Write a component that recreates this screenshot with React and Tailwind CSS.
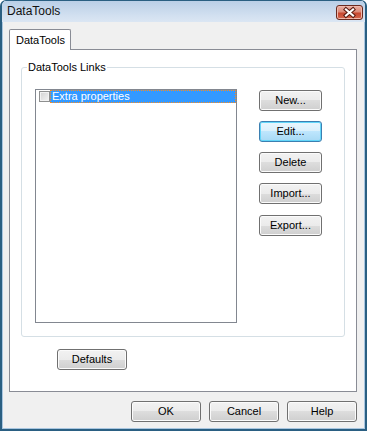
import React from "react";

const btn =
  "h-[21px] flex items-center justify-center rounded-[3px] border border-[#707070] bg-[linear-gradient(#f2f2f2,#ebebeb_50%,#dddddd_50%,#cfcfcf)] shadow-[inset_0_0_0_1px_#fbfbfb] text-[11px] text-black leading-none";

const hotBtn =
  "h-[21px] flex items-center justify-center rounded-[3px] border border-[#3c7fb1] bg-[linear-gradient(#eaf6fd,#d9f0fc_50%,#bee6fd_50%,#a7d9f5)] shadow-[inset_0_0_0_1px_#62d6f9] text-[11px] text-black leading-none";

function Button({ label, hot, className = "" }) {
  return <div className={`${hot ? hotBtn : btn} ${className}`}>{label}</div>;
}

export default function App() {
  return (
    <div className="w-[367px] h-[431px] flex flex-col overflow-hidden rounded-t-[6px] border-x-2 border-b-2 border-t border-[#2a5f82] bg-[#f0f0f0] font-[Liberation_Sans,Arial,sans-serif] select-none">
      {/* title bar */}
      <div className="h-[21px] shrink-0 flex items-start justify-between bg-[linear-gradient(#bacfe7,#d2e0f0_70%,#dbe6f3)]">
        <div className="pl-[5px] pt-[3px] text-[12px] leading-[14px] text-[#111]">DataTools</div>
        <div className="mt-[4px] mr-[2px] w-[27px] h-[15px] rounded-[3px] border border-[#6b2a1f] bg-[linear-gradient(#eab0a3,#dc8a78_45%,#c8472f_55%,#d4684f)] shadow-[inset_0_0_0_1px_#f0b9ad]">
          <svg width="25" height="13" viewBox="0 0 25 13">
            <path d="M9 3.5 L16 9.5 M16 3.5 L9 9.5" stroke="#5a1a10" strokeWidth="4.2" strokeLinecap="square" />
            <path d="M9 3.5 L16 9.5 M16 3.5 L9 9.5" stroke="#ffffff" strokeWidth="2.2" strokeLinecap="square" />
          </svg>
        </div>
      </div>

      {/* body */}
      <div className="flex-1 flex flex-col border-x border-b border-[#a9c6e0] pt-[7px] pl-[6px] pr-[7px] pb-[6px]">
        {/* tab strip */}
        <div className="h-[20px] shrink-0 flex">
          <div className="relative z-10 h-[21px] w-[62px] border-t border-x border-[#898c95] bg-white pl-[6px] pt-[4px] text-[11px] leading-[13px] text-black rounded-t-[2px]">
            DataTools
          </div>
        </div>

        {/* tab panel */}
        <div className="flex-1 flex flex-col border border-[#898c95] bg-white">
          {/* group box */}
          <div className="relative mt-[17px] mx-[11px] h-[270px] rounded-[3px] border border-[#d5dfe5] pt-[21px] pl-[13px] flex">
            <span className="absolute top-[-7px] left-[5px] bg-white px-[1px] text-[11px] leading-[13px] text-black">
              DataTools Links
            </span>

            {/* list box */}
            <div className="w-[202px] h-[234px] border border-[#828790] bg-white">
              <div className="h-[13px] flex items-center">
                <div className="ml-[3px] w-[11px] h-[11px] border border-[#8e8f8f] bg-[linear-gradient(135deg,#d2d2d2,#f4f4f4)] shadow-[inset_0_0_0_1px_#f2f2f2]" />
                <div className="flex-1 h-[13px] bg-[#3399ff] border border-dotted border-[#ff8c1a] pl-[1px] text-[11px] leading-[11px] text-white">
                  Extra properties
                </div>
              </div>
            </div>

            {/* side buttons */}
            <div className="ml-[22px] mt-px flex flex-col gap-[10px] w-[63px]">
              <Button label="New..." />
              <Button label="Edit..." hot />
              <Button label="Delete" />
              <Button label="Import..." />
              <Button label="Export..." className="mt-px" />
            </div>
          </div>

          <div className="mt-[12px] ml-[47px]">
            <Button label="Defaults" className="w-[70px]" />
          </div>
        </div>

        {/* dialog buttons */}
        <div className="mt-[9px] flex justify-end gap-[8px]">
          <Button label="OK" className="w-[70px]" />
          <Button label="Cancel" className="w-[70px]" />
          <Button label="Help" className="w-[70px]" />
        </div>
      </div>
    </div>
  );
}
